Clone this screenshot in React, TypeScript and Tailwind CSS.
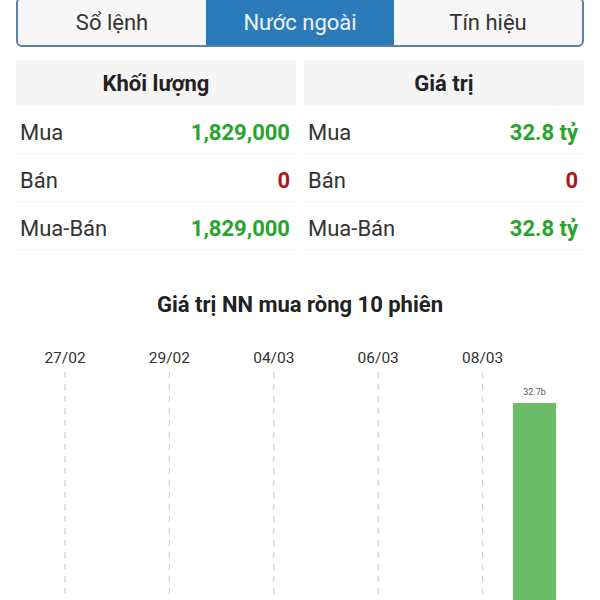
import React from 'react';

const TABS = ['Sổ lệnh', 'Nước ngoài', 'Tín hiệu'];

type Row = { label: string; value: string; tone: 'up' | 'down' };

const VOLUME: Row[] = [
  { label: 'Mua', value: '1,829,000', tone: 'up' },
  { label: 'Bán', value: '0', tone: 'down' },
  { label: 'Mua-Bán', value: '1,829,000', tone: 'up' },
];

const VALUE: Row[] = [
  { label: 'Mua', value: '32.8 tỷ', tone: 'up' },
  { label: 'Bán', value: '0', tone: 'down' },
  { label: 'Mua-Bán', value: '32.8 tỷ', tone: 'up' },
];

// 10 phiên, nhãn ngày cách 1 phiên
const SESSIONS = ['27/02', '28/02', '29/02', '01/03', '04/03', '05/03', '06/03', '07/03', '08/03', '11/03'];

function StatTable({ title, rows }: { title: string; rows: Row[] }) {
  return (
    <div className="flex-1">
      <div className="h-[46px] bg-[#f5f5f5] flex items-center justify-center text-[22px] font-bold text-[#222]">
        {title}
      </div>
      {rows.map((r) => (
        <div
          key={r.label}
          className="h-[48px] flex items-center justify-between pt-[5px] pl-[4px] pr-[6px] border-b border-[#efefef] text-[22px]"
        >
          <span className="text-[#333]">{r.label}</span>
          <span className={r.tone === 'up' ? 'font-bold text-[#27a32e]' : 'font-bold text-[#b3101a]'}>
            {r.value}
          </span>
        </div>
      ))}
    </div>
  );
}

function NetChart() {
  const x0 = 65;
  const step = 52.2;
  return (
    <svg width="600" height="270" className="block">
      {SESSIONS.map((d, i) => {
        const cx = x0 + step * i;
        if (i % 2 === 1) return null;
        return (
          <g key={d}>
            <text x={cx} y={33} textAnchor="middle" fontSize="15.5" fill="#333" fontFamily="Roboto, sans-serif">
              {d}
            </text>
            <line x1={cx} y1={42} x2={cx} y2={270} stroke="#cfcfcf" strokeWidth="1.2" strokeDasharray="6 6" />
          </g>
        );
      })}
      {/* phiên cuối */}
      <rect x={513} y={73} width={43} height={197} fill="#6cbd69" />
      <text x={534.5} y={65} textAnchor="middle" fontSize="9" fill="#555" fontFamily="Roboto, sans-serif">
        32.7b
      </text>
    </svg>
  );
}

export default function App() {
  return (
    <div className="w-[600px] h-[600px] overflow-hidden bg-white font-['Roboto',sans-serif]">
      {/* tabs */}
      <div className="mx-[16px] -mt-[3px] h-[50px] grid grid-cols-3 border-2 border-[#5a83a6] rounded-[6px] overflow-hidden bg-[#f7f7f7]">
        {TABS.map((t, i) => (
          <div
            key={t}
            className={
              i === 1
                ? 'flex items-center justify-center pt-[1px] text-[22px] bg-[#2b7bbb] text-[#eef4fa]'
                : 'flex items-center justify-center pt-[1px] text-[22px] text-[#333]'
            }
          >
            {t}
          </div>
        ))}
      </div>

      <div className="mx-[16px] mt-[13px] flex gap-[8px]">
        <StatTable title="Khối lượng" rows={VOLUME} />
        <StatTable title="Giá trị" rows={VALUE} />
      </div>

      <h2 className="mt-[41px] h-[28px] leading-[28px] text-center text-[22px] font-bold text-[#222]">
        Giá trị NN mua ròng 10 phiên
      </h2>

      <div className="mt-[11px]">
        <NetChart />
      </div>
    </div>
  );
}
